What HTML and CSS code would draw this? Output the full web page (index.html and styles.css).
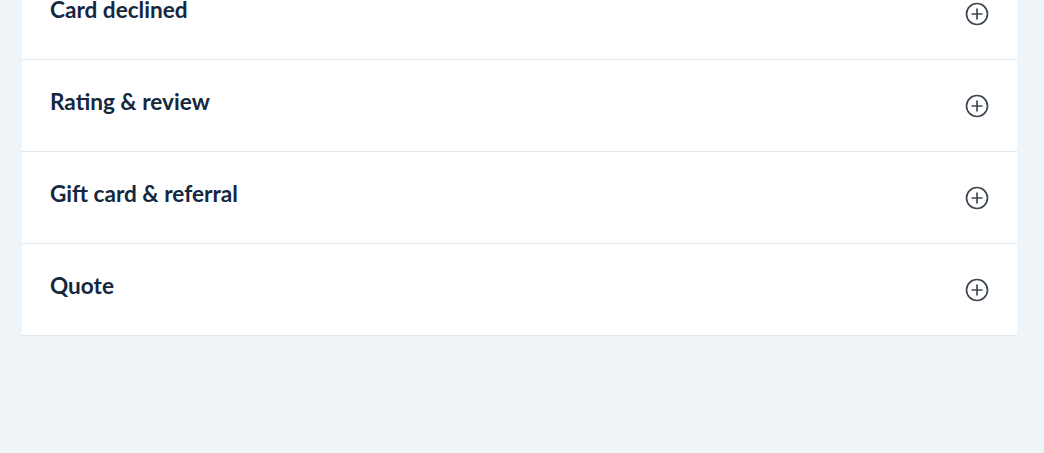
FILE: index.html
```html
<!DOCTYPE html>
<html lang="en">
<head>
    <meta charset="UTF-8">
    <meta name="viewport" content="width=device-width, initial-scale=1.0">
    <title>FAQ</title>
    <link rel="stylesheet" href="styles.css">
</head>
<body>

<div class="faq">
    <div class="faq-item">
        <h3>Card declined</h3>
        <span class="toggle"><svg width="24" height="24" viewBox="0 0 24 24"><circle cx="12" cy="12" r="10.5" fill="none" stroke="currentColor" stroke-width="1.7"/><path d="M12 6.5v11M6.5 12h11" stroke="currentColor" stroke-width="1.7" fill="none"/></svg></span>
    </div>
    <div class="faq-item">
        <h3>Rating &amp; review</h3>
        <span class="toggle"><svg width="24" height="24" viewBox="0 0 24 24"><circle cx="12" cy="12" r="10.5" fill="none" stroke="currentColor" stroke-width="1.7"/><path d="M12 6.5v11M6.5 12h11" stroke="currentColor" stroke-width="1.7" fill="none"/></svg></span>
    </div>
    <div class="faq-item">
        <h3>Gift card &amp; referral</h3>
        <span class="toggle"><svg width="24" height="24" viewBox="0 0 24 24"><circle cx="12" cy="12" r="10.5" fill="none" stroke="currentColor" stroke-width="1.7"/><path d="M12 6.5v11M6.5 12h11" stroke="currentColor" stroke-width="1.7" fill="none"/></svg></span>
    </div>
    <div class="faq-item">
        <h3>Quote</h3>
        <span class="toggle"><svg width="24" height="24" viewBox="0 0 24 24"><circle cx="12" cy="12" r="10.5" fill="none" stroke="currentColor" stroke-width="1.7"/><path d="M12 6.5v11M6.5 12h11" stroke="currentColor" stroke-width="1.7" fill="none"/></svg></span>
    </div>
</div>

</body>
</html>
```

FILE: styles.css
```css
body {
    margin: 0;
    padding: 0 0 0 22px;
    background: #eff4f8;
    font-family: Lato, "Liberation Sans", sans-serif;
}

.faq {
    width: 995px;
    margin-top: -32px; /* page is scrolled, first row partly hidden */
    background: #fff;
}

.faq-item {
    display: flex;
    align-items: center;
    justify-content: space-between;
    height: 91px;
    padding: 0 28px;
    border-bottom: 1px solid #e2e6ea;
}

.faq-item h3 {
    margin: 0;
    padding-bottom: 9px;
    font-size: 22.6px;
    font-weight: 700;
    color: #142840;
}

.toggle {
    display: flex;
    color: #3e4853;
}
```
